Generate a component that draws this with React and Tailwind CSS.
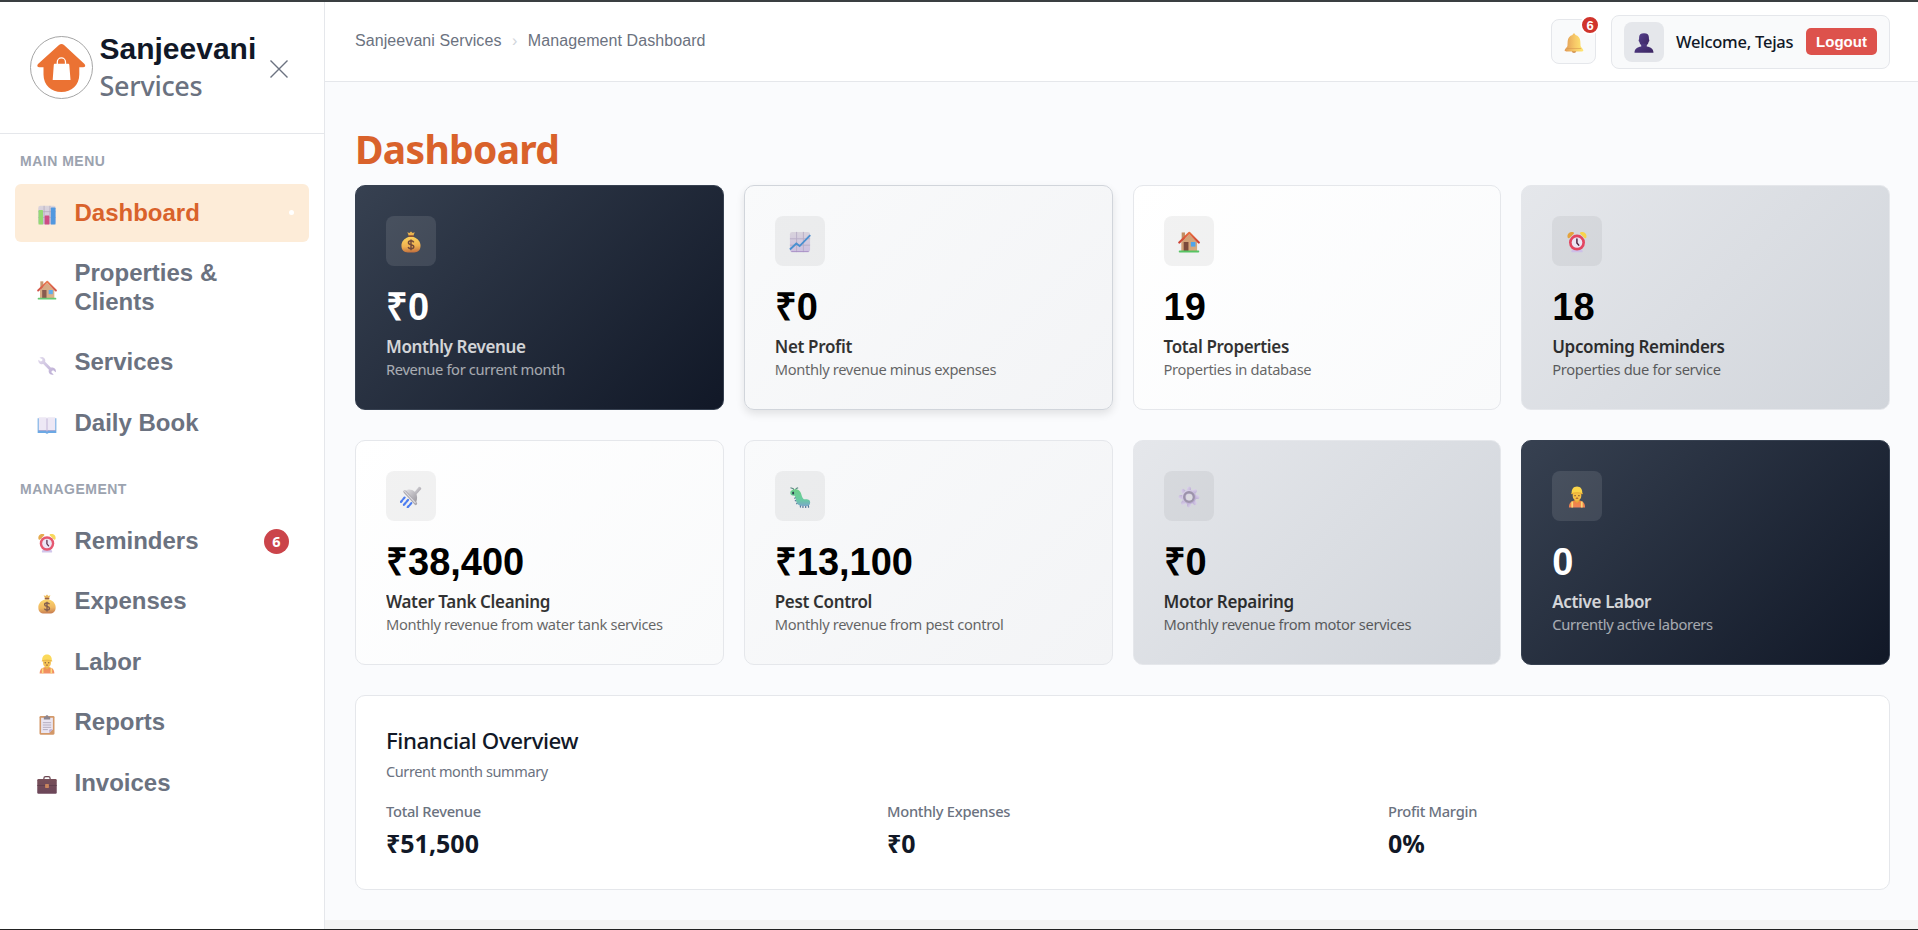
import React from 'react';

function Defs() {
  return (
    <svg width="0" height="0" className="absolute" aria-hidden="true">
      <defs>
        <linearGradient id="gold" x1="0" y1="1" x2="1" y2="0"><stop offset="0" stopColor="#e08a45" /><stop offset="1" stopColor="#ffe070" /></linearGradient>
        <linearGradient id="sack" x1="0.4" y1="0" x2="0.5" y2="1"><stop offset="0" stopColor="#fcd25c" /><stop offset="0.6" stopColor="#eeb050" /><stop offset="1" stopColor="#c2703e" /></linearGradient>
        <linearGradient id="bell" x1="0" y1="0" x2="1" y2="0"><stop offset="0" stopColor="#e09a55" /><stop offset="0.55" stopColor="#f7c968" /><stop offset="1" stopColor="#ffe873" /></linearGradient>
        <linearGradient id="paper" x1="0" y1="0" x2="0" y2="1"><stop offset="0" stopColor="#d8d3dc" /><stop offset="1" stopColor="#cdbfe0" /></linearGradient>
        <linearGradient id="lilac" x1="0" y1="0" x2="1" y2="1"><stop offset="0" stopColor="#e0d9ec" /><stop offset="1" stopColor="#b3a2cf" /></linearGradient>
        <linearGradient id="steel" x1="0" y1="0" x2="1" y2="1"><stop offset="0" stopColor="#e4e3e6" /><stop offset="1" stopColor="#98959d" /></linearGradient>
        <linearGradient id="violet" x1="0" y1="0" x2="1" y2="1"><stop offset="0" stopColor="#55408c" /><stop offset="1" stopColor="#3a2460" /></linearGradient>
        <linearGradient id="bug" x1="0" y1="0" x2="0" y2="1"><stop offset="0" stopColor="#6fcf8a" /><stop offset="0.6" stopColor="#68cba0" /><stop offset="1" stopColor="#7aa9c8" /></linearGradient>
        <linearGradient id="wall" x1="0" y1="0" x2="1" y2="1"><stop offset="0" stopColor="#cf9c72" /><stop offset="1" stopColor="#d8ac80" /></linearGradient>
        <linearGradient id="roof" x1="0" y1="0" x2="0" y2="1"><stop offset="0" stopColor="#e8703f" /><stop offset="1" stopColor="#cc4034" /></linearGradient>
        <linearGradient id="leather" x1="0" y1="0" x2="0" y2="1"><stop offset="0" stopColor="#6a3d48" /><stop offset="1" stopColor="#5c3348" /></linearGradient>
        <linearGradient id="vest" x1="0" y1="0" x2="0" y2="1"><stop offset="0" stopColor="#f0843c" /><stop offset="1" stopColor="#f0835a" /></linearGradient>
      </defs>
    </svg>
  );
}

const glyphs = {
  bars: (
    <>
      <rect x="1.5" y="1" width="21" height="22" rx="2.5" fill="url(#paper)" />
      <path d="M8.5 1v22M15.5 1v22M1.5 8h21M1.5 15h21" stroke="#aaa2b8" strokeWidth="0.9" />
      <rect x="1.8" y="6" width="5.4" height="17.5" rx="0.8" fill="#8ad86a" />
      <rect x="9.2" y="12.5" width="5.6" height="11" rx="0.8" fill="#c93c7c" />
      <rect x="16.6" y="3" width="5.6" height="20.5" rx="0.8" fill="#3f8fe0" />
    </>
  ),
  chart: (
    <>
      <rect x="1" y="1" width="22" height="22" rx="2.5" fill="url(#paper)" />
      <path d="M1 8.5h22M1 15.5h22M8.3 1v22M15.7 1v22" stroke="#b7adc6" strokeWidth="1" />
      <path d="M2.5 22.5h19" stroke="#a58cc4" strokeWidth="1" />
      <path d="M1 20.2l7-6.6 3.6 2.8L23.2 4.4" fill="none" stroke="#4a90d0" strokeWidth="2" />
    </>
  ),
  house: (
    <>
      <rect x="4" y="1.6" width="3.6" height="9" fill="#c08e64" />
      <path d="M3.6 12L12.3 3.6 20.8 12v10.2H3.6z" fill="url(#wall)" />
      <path d="M1.4 12.6L12.3 2l10.4 10.6" fill="none" stroke="url(#roof)" strokeWidth="2.3" strokeLinecap="round" strokeLinejoin="round" />
      <rect x="6.2" y="12" width="5.2" height="10" fill="#7b4a3c" />
      <rect x="14" y="12" width="5" height="5" fill="#4fa4ea" />
      <rect x="0.8" y="21.4" width="22.4" height="2" rx="1" fill="#57c463" />
    </>
  ),
  wrench: (
    <path d="M3 3.2c1.9-1.4 5-1 6.3 1.2.8 1.4.7 2.7.4 3.8l6.8 6.9c1.6-.5 3.6-.2 4.9 1.2 1.3 1.400 1.500 3 1.100 4.500l-3-2.400-1.900.7-.3 2 2.700 2.300c-2.300.8-4.800-.2-5.700-2.400-.5-1.300-.4-2.400 0-3.300L7.500 10.900C5.800 11.300 3.600 11 2.400 9.300c-.9-1.200-1-2.500-.8-3.700l2.900 2.200 1.800-.8.2-1.900z" fill="url(#lilac)" />
  ),
  book: (
    <>
      <path d="M.8 4h22.400v17.600H13.800c-.6 1.100-3 1.100-3.600 0H.8z" fill="#5b9fe2" />
      <path d="M2 2.800h8c1.100 0 2 .5 2 1.400 0-.9.9-1.400 2-1.400h8v15.600h-7.800c-1.200 0-2.200.5-2.200 1.200 0-.7-1-1.200-2.200-1.200H2z" fill="#ece6f4" />
      <path d="M12 4.200v15.200" stroke="#bcaed4" strokeWidth="1.200" />
      <path d="M2 18.600h7.800c1.200 0 2.200.5 2.200 1.200 0-.7 1-1.200 2.200-1.200H22" fill="none" stroke="#a79cc8" strokeWidth="0.900" />
    </>
  ),
  alarm: (
    <>
      <path d="M6 21.500L8 18h8l2 3.500c.6 1.200 0 1.800-1 1.800H7c-1 0-1.600-.6-1-1.800z" fill="#cdbfe8" />
      <path d="M1.700 6.800C1 3 4.300.4 7.800 1.300c1 .3 1.300.9.700 1.600L3.800 7.700c-.8.7-1.900.3-2.100-.9z" fill="#e3a33d" />
      <path d="M22.300 6.800C23 3 19.700.4 16.200 1.300c-1 .3-1.300.9-.7 1.600l4.700 4.800c.8.7 1.900.3 2.100-.9z" fill="#f8d44c" />
      <circle cx="12" cy="12.600" r="8.700" fill="#e34661" />
      <circle cx="12" cy="12.600" r="5.800" fill="#ece5f4" />
      <path d="M11.900 8.800v4.200l2 2.400" fill="none" stroke="#4c2240" strokeWidth="1.600" strokeLinecap="round" />
    </>
  ),
  money: (
    <>
      <path d="M8 1.400l2.200.9L12 .5l1.800 1.800 2.300-.9-1.700 4H9.700z" fill="#eab34e" />
      <rect x="9.200" y="4.600" width="5.700" height="2.200" rx="1" fill="#8d4f32" />
      <path d="M9.500 6.600h5c5 1.500 7.900 5.200 7.900 9.500 0 5-3 7.300-7 7.300H8.700c-4.300 0-7.100-2.400-7.100-7.300 0-4.300 2.900-8 7.900-9.500z" fill="url(#sack)" />
      <path d="M15 12.400c-.5-1.200-1.600-1.700-3-1.700-1.600 0-2.800.7-2.800 2.100 0 3 5.800 1.300 5.800 4.400 0 1.500-1.300 2.200-3 2.200-1.500 0-2.700-.6-3.100-1.900M12 9.200v11.800" fill="none" stroke="#70483a" strokeWidth="1.600" />
    </>
  ),
  worker: (
    <>
      <path d="M3.200 23.500c0-5.500 3-8 8.800-8s8.800 2.500 8.800 8z" fill="url(#vest)" />
      <path d="M6.800 17v6.500M17.200 17v6.500" stroke="#fbd873" strokeWidth="1.900" />
      <path d="M9.400 13h5.200v3.400L12 18.500l-2.600-2.100z" fill="#e8a83c" />
      <path d="M7.300 7h9.400v4c0 3-2.200 5-4.700 5s-4.700-2-4.700-5z" fill="#f5bf45" />
      <path d="M6.200 8.600C5.800 3.600 8 .6 12 .6s6.200 3 5.800 8c-3.500-1.300-8.100-1.300-11.600 0z" fill="#fbd549" />
      <path d="M5.800 8.500c4-1.500 8.400-1.500 12.400 0" stroke="#e6aa35" strokeWidth="1.200" fill="none" />
      <circle cx="9.900" cy="10.500" r="0.800" fill="#6b4530" />
      <circle cx="14.100" cy="10.500" r="0.800" fill="#6b4530" />
      <path d="M10.700 13.500q1.300-.7 2.600 0" stroke="#8c3d2a" strokeWidth="1" fill="none" />
    </>
  ),
  clipboard: (
    <>
      <rect x="3" y="1.200" width="18" height="22.400" rx="1.400" fill="#cf8d58" />
      <path d="M4.900 3.200h14.200v13.900L14.700 21.700H4.900z" fill="#e8e3f0" />
      <path d="M19.100 17.100L14.700 21.700v-3.500c0-.7.400-1.100 1.100-1.100z" fill="#b7a5cc" />
      <path d="M8.200 2h2c0-1 .7-1.700 1.800-1.700s1.800.7 1.800 1.700h2v3.500H8.200z" fill="#7f7883" />
      <path d="M7 9.200h10M7 12h10M7 14.800h10M7 17.500h6" stroke="#9a92a8" strokeWidth="0.900" />
    </>
  ),
  briefcase: (
    <>
      <path d="M8.300 5.300V4c0-1.200.9-2 2-2h3.400c1.100 0 2 .8 2 2v1.300" fill="none" stroke="#5c3540" strokeWidth="1.500" />
      <rect x="0.300" y="4.800" width="23.400" height="17.700" rx="1.400" fill="url(#leather)" />
      <path d="M.3 12.600h23.400" stroke="#4d2a38" strokeWidth="1" />
      <rect x="9.700" y="10.700" width="4.600" height="4.800" rx="0.800" fill="#c5794c" />
    </>
  ),
  bell: (
    <>
      <path d="M9.300 21.600h5.400c-.3 1.500-1.300 2.200-2.700 2.200s-2.400-.7-2.700-2.200z" fill="#c8803f" />
      <path d="M10.300 2.500c0-1.200.7-2 1.700-2s1.700.8 1.700 2c3.500.8 5.700 3.500 5.900 7.500l.3 5.500c.1 1.600 3.300 3.200 3.300 5.300 0 1-.6 1.400-1.600 1.400H2.400c-1 0-1.600-.4-1.600-1.400 0-2.100 3.200-3.700 3.300-5.300l.3-5.500c.2-4 2.400-6.700 5.900-7.500z" fill="url(#bell)" />
      <path d="M3.400 18.600h17.200" stroke="#d89850" strokeWidth="0.700" />
    </>
  ),
  person: (
    <>
      <path d="M12 .4c4 0 6 1.800 5.900 5.200v2c.7.200.8 2.600-.3 2.900-.5 2.900-2.300 5.300-5.600 5.300s-5.100-2.400-5.600-5.300c-1.100-.3-1-2.700-.3-2.900v-2C6 2.200 8 .4 12 .4z" fill="url(#violet)" />
      <path d="M8.700 13h6.600v3.200c5.100.7 8 3.200 8.100 7.400H.6c.1-4.200 3-6.700 8.100-7.400z" fill="url(#violet)" />
    </>
  ),
  shower: (
    <>
      <path d="M15 7.500l5.600-6.700c1.600-.2 2.700.9 2.600 2.600L17.500 9.500z" fill="url(#steel)" />
      <path d="M5.200 5.600C8.700 2.800 13 3.300 16 6.300c3 3.100 3.400 7.500 1.400 11.600z" fill="url(#steel)" />
      <path d="M5.300 6.200l11.800 13" stroke="#aaa7ae" strokeWidth="3.200" strokeLinecap="round" />
      <path d="M4.900 5.500l11.800 12.800" stroke="#dedce1" strokeWidth="1.200" strokeLinecap="round" />
      <path d="M5 12.600l-1.500 1.700M2.300 15.800L1 17.400M8.700 15.200l-1.600 1.900M6 18.500l-1.700 2M12.300 18.700l-1.500 1.900M9.700 21.600l-1.300 1.600" stroke="#4d7df0" strokeWidth="2.400" strokeLinecap="round" />
    </>
  ),
  caterpillar: (
    <>
      <path d="M5.200 5L4.700 3 1.600 2M6.600 5L8 2.600l2-.8" fill="none" stroke="#5a8a80" strokeWidth="1.200" />
      <path d="M7.500 12.500l-1.300.8M8.300 15.300l-1.400.8M9.600 18l-1.200 1.300M12.500 20.500v2.500M15.200 21v2.500M18.200 21v2.500M21 20.500l.3 2.500" stroke="#587a9a" strokeWidth="1.400" strokeLinecap="round" />
      <path d="M5 3.800c4-.8 6.800.7 8 3.900.9 2.500 1.200 5.600 3.200 6.700 2.300.1 6.900-.6 6.900 3.500 0 2.800-2 3.900-4.600 3.900h-4c-3.700 0-6.300-2.400-6.900-6.200-.3-1.900-.4-4-1.500-4.900C3 10.900 1.300 9.600 1.400 7.400c.1-1.900 1.500-3.200 3.600-3.600z" fill="url(#bug)" />
      <ellipse cx="4.500" cy="7.600" rx="1.100" ry="1.700" fill="#2e4150" />
    </>
  ),
  gear: (
    <>
      <g fill="url(#lilac)">
        {[0, 45, 90, 135, 180, 225, 270, 315].map((a) => (
          <rect key={a} x="9.800" y="0.600" width="4.400" height="7" rx="2" transform={`rotate(${a} 12 12)`} />
        ))}
        <circle cx="12" cy="12" r="7.800" />
      </g>
      <circle cx="12" cy="12" r="5.200" fill="none" stroke="#9c93aa" strokeWidth="2.600" />
      <circle cx="12.300" cy="12.300" r="3.500" fill="#dcdbe0" />
    </>
  ),
};

function Glyph({ name, className }) {
  return <svg viewBox="0 0 24 24" className={className}>{glyphs[name]}</svg>;
}

const mainMenu = [
  { icon: 'bars', label: 'Dashboard', active: true },
  { icon: 'house', label: 'Properties & Clients', tall: true },
  { icon: 'wrench', label: 'Services' },
  { icon: 'book', label: 'Daily Book' },
];

const managementMenu = [
  { icon: 'alarm', label: 'Reminders', badge: '6' },
  { icon: 'money', label: 'Expenses' },
  { icon: 'worker', label: 'Labor' },
  { icon: 'clipboard', label: 'Reports' },
  { icon: 'briefcase', label: 'Invoices' },
];

function NavItem({ icon, label, active, tall, badge }) {
  return (
    <a className={`flex items-center rounded-md pl-[22px] pr-5 ${tall ? 'h-[86.250px]' : 'h-[57.500px]'} ${active ? 'bg-[#fdecd8] text-[#d9622b]' : 'text-[#6b7280]'}`}>
      <Glyph name={icon} className="mt-1 h-5 w-5 shrink-0 opacity-90" />
      <span className="ml-[17.500px] w-[180px] text-[24px] leading-[28.500px] font-bold">{label}</span>
      {active && <span className="ml-auto mr-[-5px] h-[5px] w-[5px] rounded-full bg-white" />}
      {badge && (
        <span className="ml-auto flex h-[25px] w-[25px] shrink-0 items-center justify-center rounded-full bg-[#cb444a] pt-px font-['Noto_Sans',sans-serif] text-[14.500px] leading-none font-bold text-white">{badge}</span>
      )}
    </a>
  );
}

function Sidebar() {
  return (
    <aside className="flex w-[325px] shrink-0 flex-col border-r border-[#e5e7eb] bg-white">
      <div className="flex h-[132px] items-start border-b border-[#e5e7eb] pt-[29px] pl-[30px]">
        <svg viewBox="0 0 63 63" className="mt-[5px] h-[63px] w-[63px] shrink-0">
          <circle cx="31.500" cy="31.500" r="31" fill="#fff" stroke="#9b9b9b" strokeWidth="0.900" />
          <path d="M29 9q2.500-2 5 0L54.500 28q2 3-1.500 3.200H49.300V38.500C49.300 49 41.500 56 31.400 56S13.500 49 13.500 38.500V31.200H9.500q-3.500-.2-1.500-3.200z" fill="#eb7233" />
          <path d="M27.300 28V26a4.100 4.100 0 0 1 8.200 0v2" fill="none" stroke="#fff" strokeWidth="1.300" />
          <path d="M24.700 27.800h13.600q.9 0 1 .9l1.200 15.300H22.700l1.100-15.300q.1-.9.9-.9z" fill="#fff" />
        </svg>
        <div className="ml-[6.500px] w-[160px]">
          <div className="h-9 text-[30px] leading-9 font-bold text-[#111827]">Sanjeevani</div>
          <div className="font-['Noto_Sans',sans-serif] text-[27px] leading-[37px] font-medium tracking-[-0.280px] text-[#6b7280]">Services</div>
        </div>
        <svg viewBox="0 0 18 18" className="mt-[29px] ml-[10.500px] h-[18px] w-[18px]">
          <path d="M.5.500l17 17M17.500.5l-17 17" stroke="#6b7280" strokeWidth="1.400" />
        </svg>
      </div>
      <nav className="px-[15px] pt-[17px]">
        <h2 className="pl-[5px] text-[14px] leading-5 font-bold tracking-[0.500px] text-[#9ca3af]">MAIN MENU</h2>
        <div className="mt-[13px] flex flex-col gap-[3px]">
          {mainMenu.map((item) => <NavItem key={item.label} {...item} />)}
        </div>
        <h2 className="mt-[27.500px] pl-[5px] text-[14px] leading-5 font-bold tracking-[0.500px] text-[#9ca3af]">MANAGEMENT</h2>
        <div className="mt-[13px] flex flex-col gap-[3px]">
          {managementMenu.map((item) => <NavItem key={item.label} {...item} />)}
        </div>
      </nav>
    </aside>
  );
}

function Header() {
  return (
    <header className="flex h-20 shrink-0 border-b border-[#e5e7eb] bg-white pr-7 pl-[30px]">
      <div className="flex h-[78px] items-center text-[16px] text-[#6b7280]">
        <span className="tracking-[0.080px]">Sanjeevani Services</span>
        <span className="mx-[10.500px] text-[#d1d5db]">›</span>
        <span className="tracking-[0.080px]">Management Dashboard</span>
      </div>
      <div className="ml-auto flex items-start">
        <button className="relative mt-[17px] mr-[15px] flex h-[45px] w-[45px] items-center justify-center rounded-lg border border-[#e5e7eb] bg-[#f9fafb]">
          <Glyph name="bell" className="mt-0.5 h-5 w-5" />
          <span className="absolute -top-[5px] -right-[5px] flex h-5 w-5 items-center justify-center rounded-full border-2 border-white bg-[#d0342c] text-[13px] leading-none font-bold text-white">6</span>
        </button>
        <div className="mt-[13px] flex h-[54px] w-[279px] items-center rounded-lg border border-[#e5e7eb] bg-[#f9fafb] pr-3 pl-3">
          <span className="flex h-10 w-10 shrink-0 items-center justify-center rounded-lg bg-[#e5e7eb]">
            <Glyph name="person" className="mt-0.5 h-5 w-5" />
          </span>
          <span className="ml-3 w-[130px] pt-px font-['Noto_Sans',sans-serif] text-[16.500px] font-medium tracking-[-0.240px] whitespace-nowrap text-[#111827]">Welcome, Tejas</span>
          <button className="mb-px flex h-[27px] w-[71px] shrink-0 items-center justify-center rounded-[5px] bg-[#dd524c] pb-px text-[15px] leading-none font-bold text-white">Logout</button>
        </div>
      </div>
    </header>
  );
}

const tones = {
  dark: 'border-[#374151] bg-linear-135 from-[#374151] to-[#111827] text-white',
  soft: 'border-[#e5e7eb] bg-linear-135 from-[#f9fafb] to-[#f3f4f6] text-black',
  hover: 'border-[#d1d5db] bg-linear-135 from-[#f9fafb] to-[#f3f4f6] text-black shadow-[0_4px_8px_rgba(0,0,0,0.100)]',
  white: 'border-[#e5e7eb] bg-linear-135 from-white to-[#f9fafb] text-black',
  grey: 'border-[#e5e7eb] bg-linear-135 from-[#e5e7eb] to-[#d1d5db] text-black',
};

const stats = [
  { tone: 'dark', icon: 'money', value: '₹0', label: 'Monthly Revenue', note: 'Revenue for current month' },
  { tone: 'hover', icon: 'chart', value: '₹0', label: 'Net Profit', note: 'Monthly revenue minus expenses' },
  { tone: 'white', icon: 'house', value: '19', label: 'Total Properties', note: 'Properties in database' },
  { tone: 'grey', icon: 'alarm', value: '18', label: 'Upcoming Reminders', note: 'Properties due for service' },
  { tone: 'white', icon: 'shower', value: '₹38,400', label: 'Water Tank Cleaning', note: 'Monthly revenue from water tank services' },
  { tone: 'soft', icon: 'caterpillar', value: '₹13,100', label: 'Pest Control', note: 'Monthly revenue from pest control' },
  { tone: 'grey', icon: 'gear', value: '₹0', label: 'Motor Repairing', note: 'Monthly revenue from motor services' },
  { tone: 'dark', icon: 'worker', value: '0', label: 'Active Labor', note: 'Currently active laborers' },
];

function StatCard({ tone, icon, value, label, note }) {
  return (
    <article className={`h-[225px] rounded-[10px] border p-[30px] ${tones[tone]}`}>
      <div className={`flex h-[50px] w-[50px] items-center justify-center rounded-lg ${tone === 'dark' ? 'bg-white/10' : 'bg-black/5'}`}>
        <Glyph name={icon} className="mt-0.5 h-[22px] w-[22px]" />
      </div>
      <div className="mt-[18px] text-[38px] leading-[46px] font-bold">{value}</div>
      <div className="mt-[5px] font-['Noto_Sans',sans-serif] text-[17px] leading-[23px] font-semibold tracking-[-0.350px] opacity-80">{label}</div>
      <div className="font-['Noto_Sans',sans-serif] text-[14.700px] leading-[22px] tracking-[-0.340px] opacity-60">{note}</div>
    </article>
  );
}

const summary = [
  ['Total Revenue', '₹51,500'],
  ['Monthly Expenses', '₹0'],
  ['Profit Margin', '0%'],
];

export default function App() {
  return (
    <div className="flex h-[930px] flex-col overflow-hidden border-t-2 border-b border-t-[#3a3f41] border-b-[#222] bg-[#fafbfd] font-['Liberation_Sans',Arial,sans-serif]">
      <Defs />
      <div className="flex min-h-0 flex-1">
        <Sidebar />
        <div className="flex min-w-0 flex-1 flex-col">
          <Header />
          <main className="flex-1 pt-[42px] pr-7 pl-[30px]">
            <h1 className="font-['Noto_Sans',sans-serif] text-[39px] leading-[50px] font-bold tracking-[-0.700px] text-[#d9622b]">Dashboard</h1>
            <section className="mt-[11px] grid grid-cols-4 gap-x-5 gap-y-[30px]">
              {stats.map((s) => <StatCard key={s.label} {...s} />)}
            </section>
            <section className="mt-[30px] h-[195px] rounded-[10px] border border-[#e5e7eb] bg-white p-[30px] font-['Noto_Sans',sans-serif] text-[#111827]">
              <h3 className="text-[22.300px] leading-[30px] font-medium tracking-[-0.420px]">Financial Overview</h3>
              <p className="mt-1 text-[14.500px] leading-[22px] tracking-[-0.380px] text-[#6b7280]">Current month summary</p>
              <div className="mt-[18px] grid grid-cols-3 gap-[30px]">
                {summary.map(([label, value]) => (
                  <div key={label}>
                    <div className="text-[14.700px] leading-[22px] font-medium tracking-[-0.280px] text-[#6b7280]">{label}</div>
                    <div className="mt-1 text-[25px] leading-[34px] font-bold">{value}</div>
                  </div>
                ))}
              </div>
            </section>
          </main>
          <div className="h-[9px] bg-[#f4f4f4]" />
        </div>
      </div>
    </div>
  );
}
